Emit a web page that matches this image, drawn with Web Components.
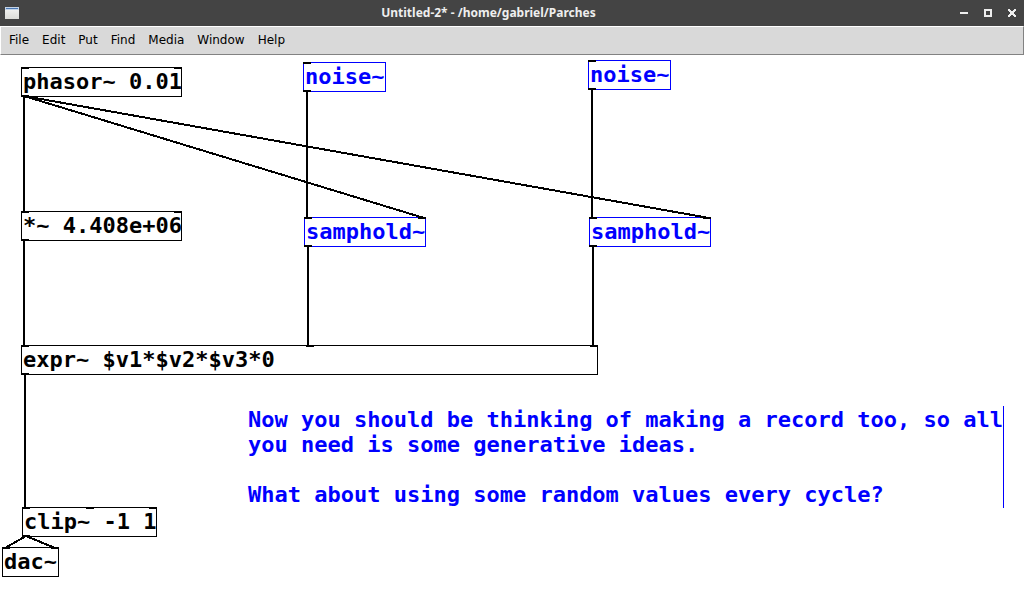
<!DOCTYPE html>
<html lang="en">
<head>
<meta charset="utf-8">
<title>Untitled-2* - /home/gabriel/Parches</title>
<style>
  html, body { height: 100%; margin: 0; background: #fff; }
</style>
</head>
<body>
<patch-window>
  <title-bar slot="title">Untitled-2* - /home/gabriel/Parches</title-bar>
  <menu-bar slot="menu">
    <menu-entry>File</menu-entry>
    <menu-entry>Edit</menu-entry>
    <menu-entry>Put</menu-entry>
    <menu-entry>Find</menu-entry>
    <menu-entry>Media</menu-entry>
    <menu-entry>Window</menu-entry>
    <menu-entry>Help</menu-entry>
  </menu-bar>
  <patch-canvas>
    <patch-object x="21" y="12" inlets="2" outlets="1">phasor~ 0.01</patch-object>
    <patch-object x="303" y="7" inlets="1" outlets="1" selected>noise~</patch-object>
    <patch-object x="588" y="5" inlets="1" outlets="1" selected>noise~</patch-object>
    <patch-object x="21" y="156" inlets="2" outlets="1">*~ 4.408e+06</patch-object>
    <patch-object x="304" y="162" inlets="2" outlets="1" selected>samphold~</patch-object>
    <patch-object x="589" y="162" inlets="2" outlets="1" selected>samphold~</patch-object>
    <patch-object x="21" y="290" inlets="3" outlets="1" columns="44">expr~ $v1*$v2*$v3*0</patch-object>
    <patch-object x="22" y="452" inlets="3" outlets="1">clip~ -1 1</patch-object>
    <patch-object x="2" y="492" inlets="2" outlets="0">dac~</patch-object>
    <patch-comment x="248" y="351">Now you should be thinking of making a record too, so all
you need is some generative ideas.

What about using some random values every cycle?</patch-comment>
    <patch-wire from="24,41" to="24,157"></patch-wire>
    <patch-wire from="24,41" to="424,163"></patch-wire>
    <patch-wire from="24,41" to="709,163"></patch-wire>
    <patch-wire from="307,36" to="307,163"></patch-wire>
    <patch-wire from="592,34" to="592,163"></patch-wire>
    <patch-wire from="24,185" to="24,291"></patch-wire>
    <patch-wire from="308,191" to="308,291"></patch-wire>
    <patch-wire from="593,191" to="593,291"></patch-wire>
    <patch-wire from="25,319" to="25,453"></patch-wire>
    <patch-wire from="26,481" to="5,493"></patch-wire>
    <patch-wire from="26,481" to="55,493"></patch-wire>
  </patch-canvas>
</patch-window>

<script>
function attach(host, html) {
  const template = document.createElement('template');
  template.innerHTML = html.trim();
  const root = host.attachShadow({ mode: 'open' });
  root.append(template.content.cloneNode(true));
  return root;
}

customElements.define('patch-window', class extends HTMLElement {
  constructor() {
    super();
    attach(this, `
      <style>
        :host { display: flex; flex-direction: column; min-height: 100%; background: #fff; }
        main { flex: 1; display: flex; }
      </style>
      <slot name="title"></slot>
      <slot name="menu"></slot>
      <main><slot></slot></main>`);
  }
});

customElements.define('title-bar', class extends HTMLElement {
  constructor() {
    super();
    attach(this, `
      <style>
        :host { display: flex; align-items: center; height: 26px; background: #444; color: #eee;
                font: bold 12px/26px "Noto Sans", "Open Sans", sans-serif; }
        .icon { box-sizing: border-box; width: 25px; padding-left: 5px; display: flex; }
        .name { flex: 1; text-align: center; white-space: nowrap; overflow: hidden; }
        button { width: 24px; height: 26px; padding: 0; border: 0; background: none; color: inherit;
                 display: flex; align-items: center; justify-content: center; }
        svg { display: block; }
      </style>
      <span class="icon">
        <svg width="14" height="12" shape-rendering="crispEdges" aria-hidden="true">
          <defs><linearGradient id="g" x2="0" y2="1"><stop stop-color="#f6f6f5"/><stop offset="1" stop-color="#dcdcd8"/></linearGradient></defs>
          <path fill="url(#g)" d="M0 0h14v12H0z"/>
          <path fill="#c4d4e8" d="M0 0h14v3H0z"/>
          <path fill="#4a78b4" d="M1 1h12v1H1z"/>
        </svg>
      </span>
      <span class="name"><slot></slot></span>
      <button type="button" aria-label="Minimize"><svg width="8" height="8"><path fill="currentColor" d="M0 3h8v2H0z"/></svg></button>
      <button type="button" aria-label="Maximize"><svg width="8" height="8"><path fill="currentColor" fill-rule="evenodd" d="M0 0h8v8H0zM2 2v4h4V2z"/></svg></button>
      <button type="button" aria-label="Close"><svg width="8" height="8" shape-rendering="crispEdges"><path fill="currentColor" d="M0 0h2v1h1v1h2V1h1V0h2v2H7v1H6v2h1v1h1v2H6V7H5V6H3v1H2v1H0V6h1V5h1V3H1V2H0z"/></svg></button>`);
  }
});

customElements.define('menu-bar', class extends HTMLElement {
  constructor() {
    super();
    attach(this, `
      <style>
        :host { display: block; border: 1px solid #fff; border-right-color: #828282; border-bottom-color: #828282;
                background: #d9d9d9; }
        nav { display: flex; gap: 1px; height: 27px; padding-left: 2px; }
      </style>
      <nav><slot></slot></nav>`);
  }
});

customElements.define('menu-entry', class extends HTMLElement {
  constructor() {
    super();
    attach(this, `
      <style>
        :host { display: block; }
        button { height: 27px; padding: 0 6px; border: 0; background: none; color: #000;
                 font: 12px/27px "DejaVu Sans", sans-serif; }
      </style>
      <button type="button"><slot></slot></button>`);
  }
});

customElements.define('patch-canvas', class extends HTMLElement {
  constructor() {
    super();
    attach(this, `
      <style>
        :host { display: block; position: relative; flex: 1; min-height: 522px; overflow: hidden;
                font: bold 22px/25px "DejaVu Sans Mono", monospace; color: #000; text-rendering: optimizeSpeed; }
      </style>
      <slot></slot>`);
  }
});

/* An object box is as wide as its text in 13px columns, plus its edges. */
customElements.define('patch-object', class extends HTMLElement {
  connectedCallback() {
    if (this.shadowRoot) return;
    const ports = n => '<i></i>'.repeat(Number(this.getAttribute(n)));
    attach(this, `
      <style>
        :host { display: block; position: absolute; box-sizing: border-box; height: 30px;
                padding-left: 1px; border: 1px solid #000; line-height: 27px; }
        :host([selected]) { border-color: #00f; color: #00f; }
        .text { white-space: pre; }
        .ports { position: absolute; left: -1px; right: -1px; display: flex; justify-content: space-between; }
        .in { top: -1px; }
        .out { bottom: -1px; }
        i { width: 8px; height: 2px; background: #000; }
      </style>
      <div class="text"><slot></slot></div>
      <div class="ports in">${ports('inlets')}</div>
      <div class="ports out">${ports('outlets')}</div>`);
    const columns = Number(this.getAttribute('columns')) || this.textContent.length;
    this.style.left = this.getAttribute('x') + 'px';
    this.style.top = this.getAttribute('y') + 'px';
    this.style.width = columns * 13 + 5 + 'px';
  }
});

customElements.define('patch-comment', class extends HTMLElement {
  connectedCallback() {
    if (this.shadowRoot) return;
    attach(this, `
      <style>
        :host { display: block; position: absolute; border-right: 1px solid #00f; color: #00f; }
        .text { padding: 1px 0; white-space: pre; }
      </style>
      <div class="text"><slot></slot></div>`);
    this.style.left = this.getAttribute('x') + 'px';
    this.style.top = this.getAttribute('y') + 'px';
  }
});

customElements.define('patch-wire', class extends HTMLElement {
  connectedCallback() {
    if (this.shadowRoot) return;
    const [x1, y1] = this.getAttribute('from').split(',');
    const [x2, y2] = this.getAttribute('to').split(',');
    attach(this, `
      <style>
        :host { display: block; position: absolute; inset: 0; pointer-events: none; }
        svg { display: block; width: 100%; height: 100%; }
        line { stroke: #000; stroke-width: 2; shape-rendering: crispEdges; }
      </style>
      <svg aria-hidden="true"><line x1="${x1}" y1="${y1}" x2="${x2}" y2="${y2}"/></svg>`);
  }
});
</script>
</body>
</html>
